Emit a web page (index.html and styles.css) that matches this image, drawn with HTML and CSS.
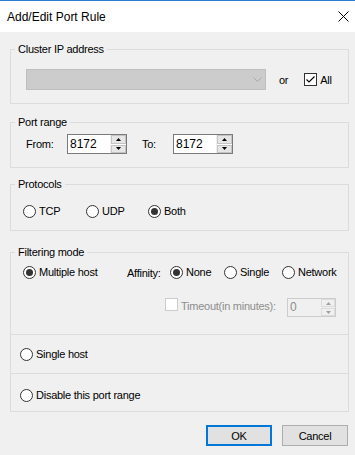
FILE: index.html
```html
<!DOCTYPE html>
<html lang="en">
<head>
<meta charset="utf-8">
<title>Add/Edit Port Rule</title>
<link rel="stylesheet" href="styles.css">
</head>
<body>
<div class="window">
  <div class="titlebar">
    <span class="title">Add/Edit Port Rule</span>
    <svg class="close" width="11" height="11" viewBox="0 0 11 11"><path d="M0.5 0.5 L10.5 10.5 M10.5 0.5 L0.5 10.5" stroke="#000" stroke-width="1" fill="none"/></svg>
  </div>
  <div class="content">
    <fieldset class="group g-cluster">
      <legend>Cluster IP address</legend>
      <div class="cluster-row">
        <div class="combo">
          <svg width="9" height="5" viewBox="0 0 9 5"><path d="M0.5 0.5 L4.5 4.5 L8.5 0.5" stroke="#a8a8a8" stroke-width="1" fill="none"/></svg>
        </div>
        <span class="or">or</span>
        <span class="check">
          <svg class="box" width="13" height="13" viewBox="0 0 13 13"><rect x="0.5" y="0.5" width="12" height="12" fill="#fff" stroke="#333"/><path d="M2.5 6.5 L5 9 L10.5 3.5" stroke="#000" stroke-width="1.1" fill="none"/></svg>
          <span>All</span>
        </span>
      </div>
    </fieldset>

    <fieldset class="group g-port">
      <legend>Port range</legend>
      <div class="port-row">
        <span class="from-label">From:</span>
        <div class="spin">
          <span class="spin-value">8172</span>
          <span class="spin-buttons">
            <span class="spin-btn"><svg width="5" height="3" viewBox="0 0 5 3"><path d="M2.5 0 L5 3 L0 3 Z" fill="#000"/></svg></span>
            <span class="spin-btn"><svg width="5" height="3" viewBox="0 0 5 3"><path d="M0 0 L5 0 L2.5 3 Z" fill="#000"/></svg></span>
          </span>
        </div>
        <span class="to-label">To:</span>
        <div class="spin">
          <span class="spin-value">8172</span>
          <span class="spin-buttons">
            <span class="spin-btn"><svg width="5" height="3" viewBox="0 0 5 3"><path d="M2.5 0 L5 3 L0 3 Z" fill="#000"/></svg></span>
            <span class="spin-btn"><svg width="5" height="3" viewBox="0 0 5 3"><path d="M0 0 L5 0 L2.5 3 Z" fill="#000"/></svg></span>
          </span>
        </div>
      </div>
    </fieldset>

    <fieldset class="group g-proto">
      <legend>Protocols</legend>
      <div class="proto-row">
        <span class="radio w-tcp"><svg width="13" height="13" viewBox="0 0 13 13"><circle cx="6.5" cy="6.5" r="6" fill="#fff" stroke="#333"/></svg><span>TCP</span></span>
        <span class="radio w-udp"><svg width="13" height="13" viewBox="0 0 13 13"><circle cx="6.5" cy="6.5" r="6" fill="#fff" stroke="#333"/></svg><span>UDP</span></span>
        <span class="radio"><svg width="13" height="13" viewBox="0 0 13 13"><circle cx="6.5" cy="6.5" r="6" fill="#fff" stroke="#333"/><circle cx="6.5" cy="6.5" r="3.5" fill="#333"/></svg><span>Both</span></span>
      </div>
    </fieldset>

    <fieldset class="group g-filter">
      <legend>Filtering mode</legend>
      <div class="sec sec-multi">
        <div class="multi-row">
          <span class="radio w-multi"><svg width="13" height="13" viewBox="0 0 13 13"><circle cx="6.5" cy="6.5" r="6" fill="#fff" stroke="#333"/><circle cx="6.5" cy="6.5" r="3.5" fill="#333"/></svg><span>Multiple host</span></span>
          <span class="affinity">Affinity:</span>
          <span class="radio w-none"><svg width="13" height="13" viewBox="0 0 13 13"><circle cx="6.5" cy="6.5" r="6" fill="#fff" stroke="#333"/><circle cx="6.5" cy="6.5" r="3.5" fill="#333"/></svg><span>None</span></span>
          <span class="radio w-single"><svg width="13" height="13" viewBox="0 0 13 13"><circle cx="6.5" cy="6.5" r="6" fill="#fff" stroke="#333"/></svg><span>Single</span></span>
          <span class="radio"><svg width="13" height="13" viewBox="0 0 13 13"><circle cx="6.5" cy="6.5" r="6" fill="#fff" stroke="#333"/></svg><span>Network</span></span>
        </div>
        <div class="timeout-row">
          <svg class="tbox" width="13" height="13" viewBox="0 0 13 13"><rect x="0.5" y="0.5" width="12" height="12" fill="#fff" stroke="#cccccc"/></svg>
          <span class="timeout-label">Timeout(in minutes):</span>
          <div class="spin spin-disabled">
            <span class="spin-value">0</span>
            <span class="spin-buttons">
              <span class="spin-btn"><svg width="5" height="3" viewBox="0 0 5 3"><path d="M2.5 0 L5 3 L0 3 Z" fill="#a0a0a0"/></svg></span>
              <span class="spin-btn"><svg width="5" height="3" viewBox="0 0 5 3"><path d="M0 0 L5 0 L2.5 3 Z" fill="#a0a0a0"/></svg></span>
            </span>
          </div>
        </div>
      </div>
      <div class="sec sec-single">
        <span class="radio"><svg width="13" height="13" viewBox="0 0 13 13"><circle cx="6.5" cy="6.5" r="6" fill="#fff" stroke="#333"/></svg><span>Single host</span></span>
      </div>
      <div class="sec sec-disable">
        <span class="radio"><svg width="13" height="13" viewBox="0 0 13 13"><circle cx="6.5" cy="6.5" r="6" fill="#fff" stroke="#333"/></svg><span>Disable this port range</span></span>
      </div>
    </fieldset>

    <div class="buttons">
      <button class="btn btn-default" type="button">OK</button>
      <button class="btn" type="button">Cancel</button>
    </div>
  </div>
</div>
</body>
</html>
```

FILE: styles.css
```css
* { box-sizing: border-box; }
html, body { margin: 0; padding: 0; }
body {
  width: 355px;
  height: 455px;
  overflow: hidden;
  background: #f0f0f0;
  font-family: "Liberation Sans", Arial, sans-serif;
  font-size: 11px;
  letter-spacing: -0.25px;
  color: #000;
}
svg { display: block; flex: none; }

.window { display: flex; flex-direction: column; height: 455px; }

.titlebar {
  height: 32px;
  background: #fff;
  border-top: 1px solid #2b7fd4;
  display: flex;
  align-items: center;
  justify-content: space-between;
  padding: 0 6px 0 7px;
}
.title { font-size: 12px; letter-spacing: 0; }

.content { padding: 0 6px 0 10px; display: flex; flex-direction: column; }

.group {
  margin: 0;
  padding: 0;
  min-width: 0;
  border: 1px solid #dcdcdc;
}
.group legend {
  margin-left: 4px;
  padding: 0 3px;
  height: 13px;
  line-height: 13px;
}

.g-cluster { margin-top: 11px; }
.g-port { margin-top: 12px; }
.g-proto { margin-top: 10px; }
.g-filter { margin-top: 15px; }

/* cluster */
.cluster-row { display: flex; align-items: center; padding: 13px 0 13px 15px; }
.combo {
  width: 240px;
  height: 21px;
  background: #cccccc;
  border: 1px solid #bfbfbf;
  display: flex;
  align-items: center;
  justify-content: flex-end;
  padding-right: 3px;
}
.or { margin-left: 13px; }
.check { display: flex; align-items: center; margin-left: 16px; }
.check span { margin-left: 3px; }

/* port */
.port-row { display: flex; align-items: center; padding: 5px 0 13px 15px; }
.from-label { width: 41px; }
.to-label { width: 31px; margin-left: 15px; }
.spin {
  display: flex;
  width: 60px;
  height: 20px;
  border: 1px solid #7a7a7a;
  background: #fff;
}
.spin-value { flex: 1; padding-left: 2px; line-height: 18px; font-size: 12px; letter-spacing: 0; }
.spin-buttons {
  width: 16px;
  display: flex;
  flex-direction: column;
  gap: 1px;
  background: #fff;
  border-left: 1px solid #f0f0f0;
}
.spin-btn {
  flex: 1;
  background: #e6e6e6;
  border: 1px solid #c4c4c4;
  display: flex;
  align-items: center;
  justify-content: center;
}
.spin-disabled { width: 49px; height: 19px; border-color: #cccccc; background: #f0f0f0; color: #8d8d8d; }
.spin-disabled .spin-value { line-height: 17px; }
.spin-disabled .spin-buttons { background: #f0f0f0; width: 15px; }
.spin-disabled .spin-btn { background: #f0f0f0; border-color: #dcdcdc; }

/* radios */
.radio { display: flex; align-items: center; height: 13px; line-height: 13px; }
.radio span { margin-left: 3px; }
.proto-row { display: flex; padding: 14px 0 12px 12px; }
.w-tcp { width: 63px; }
.w-udp { width: 62px; }

/* filtering */
.sec-multi { padding: 7px 0 17px 12px; }
.multi-row { display: flex; align-items: center; }
.w-multi { width: 104px; }
.affinity { width: 43px; }
.w-none { width: 54px; }
.w-single { width: 58px; }
.timeout-row { display: flex; align-items: flex-start; margin-top: 19px; padding-left: 142px; }
.timeout-label { margin-left: 3px; width: 106px; color: #8d8d8d; line-height: 17px; }
.sec-single { border-top: 1px solid #dcdcdc; padding: 13px 0 12px 9px; }
.sec-disable { border-top: 1px solid #dcdcdc; padding: 15px 0 9px 9px; }

/* buttons */
.buttons { display: flex; justify-content: flex-end; gap: 10px; margin-top: 13px; padding-right: 1px; }
.btn {
  width: 66px;
  height: 21px;
  margin: 0;
  padding: 0;
  background: #e1e1e1;
  border: 1px solid #adadad;
  font-family: inherit;
  font-size: 11px;
  letter-spacing: -0.25px;
  color: #000;
}
.btn-default { border: 2px solid #0078d7; }
```
